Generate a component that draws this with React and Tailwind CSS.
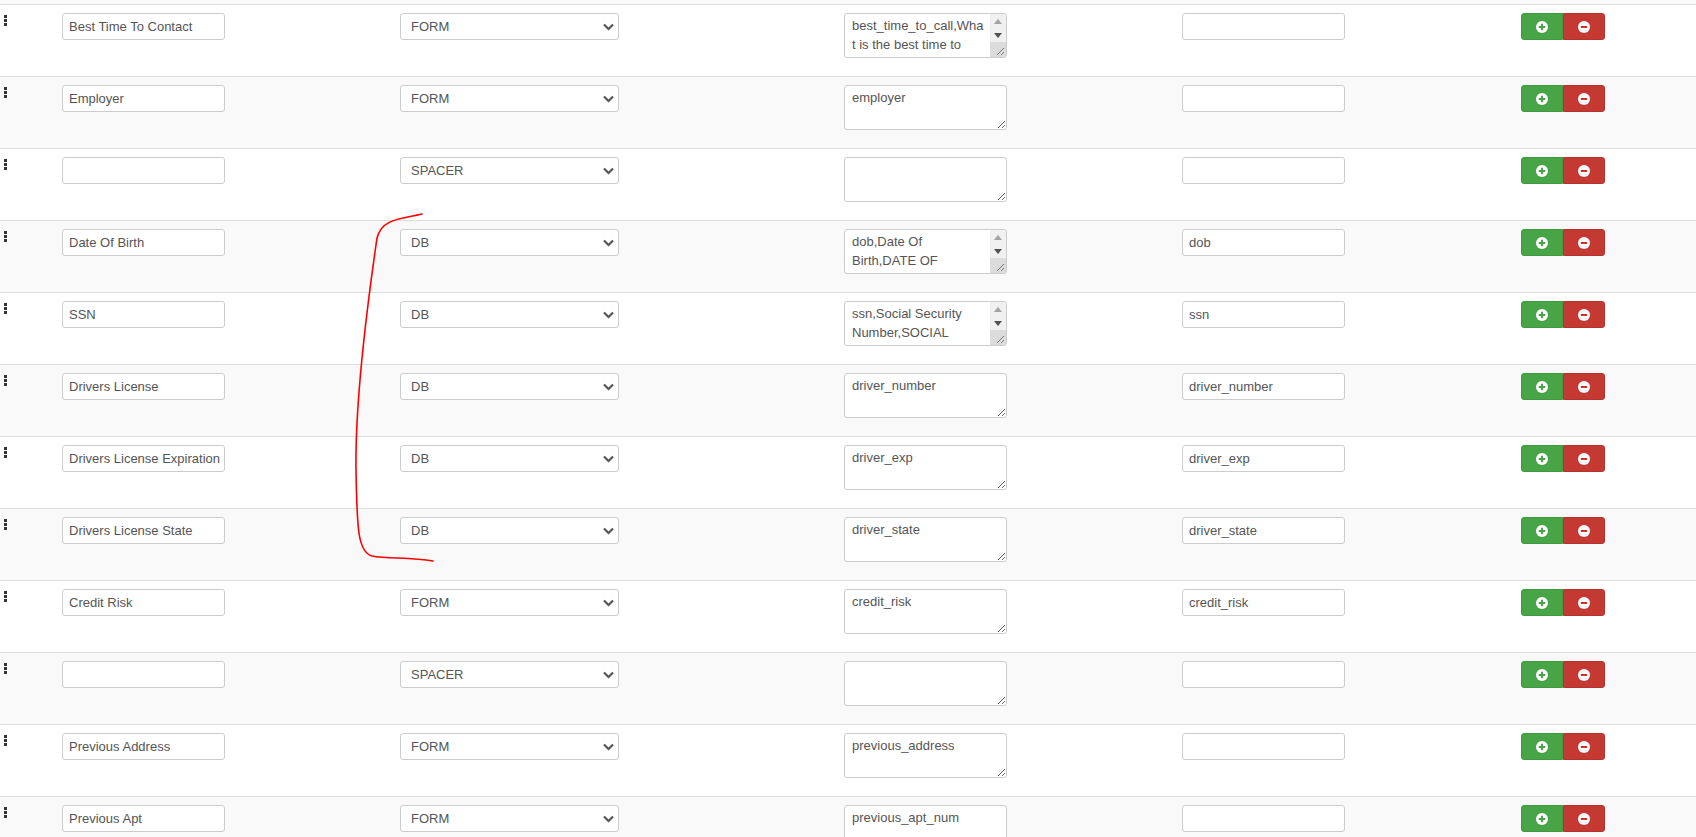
import React from 'react';

const rows = [
    { label: 'Best Time To Contact', type: 'FORM', names: 'best_time_to_call,What is the best time to contact you?,BEST TIME TO CALL', field: '', scroll: true },
    { label: 'Employer', type: 'FORM', names: 'employer', field: '' },
    { label: '', type: 'SPACER', names: '', field: '' },
    { label: 'Date Of Birth', type: 'DB', names: 'dob,Date Of Birth,DATE OF BIRTH,Date of Birth,DOB', field: 'dob', scroll: true },
    { label: 'SSN', type: 'DB', names: 'ssn,Social Security Number,SOCIAL SECURITY NUMBER,SSN', field: 'ssn', scroll: true },
    { label: 'Drivers License', type: 'DB', names: 'driver_number', field: 'driver_number' },
    { label: 'Drivers License Expiration', type: 'DB', names: 'driver_exp', field: 'driver_exp' },
    { label: 'Drivers License State', type: 'DB', names: 'driver_state', field: 'driver_state' },
    { label: 'Credit Risk', type: 'FORM', names: 'credit_risk', field: 'credit_risk' },
    { label: '', type: 'SPACER', names: '', field: '' },
    { label: 'Previous Address', type: 'FORM', names: 'previous_address', field: '' },
    { label: 'Previous Apt', type: 'FORM', names: 'previous_apt_num', field: '' },
];

const inputCls = 'h-[27px] w-[163px] border border-[#ccc] rounded-[3px] bg-white pl-[6px] pr-[2px] text-[13px] text-[#555] outline-none';

// vertical "option" handle used for dragging rows
const Handle = () => (
    <div className="flex flex-col gap-[1px]">
        <span className="block w-[3px] h-[3px] bg-[#333]" />
        <span className="block w-[3px] h-[3px] bg-[#333]" />
        <span className="block w-[3px] h-[3px] bg-[#333]" />
    </div>
);

const Chevron = () => (
    <svg className="absolute right-[4px] top-[9px] pointer-events-none" width="13" height="9" viewBox="0 0 13 9">
        <path d="M2 2.5l4.5 4.5 4.5-4.5" fill="none" stroke="#555" strokeWidth="2.2" />
    </svg>
);

const SignIcon = ({ plus, color }) => (
    <svg width="12" height="12" viewBox="0 0 12 12">
        <circle cx="6" cy="6" r="6" fill="#fff" />
        <path d="M2.8 6h6.4" stroke={color} strokeWidth="2" />
        {plus && <path d="M6 2.8v6.4" stroke={color} strokeWidth="2" />}
    </svg>
);

// windows-like scrollbar drawn over textareas whose text overflows
const FakeScrollbar = () => (
    <div className="absolute right-[1px] top-[1px] bottom-[1px] flex w-[16px] flex-col rounded-r-[2px] overflow-hidden pointer-events-none">
        <div className="flex h-[14px] items-center justify-center bg-[#f0f0f0]">
            <svg width="8" height="5" viewBox="0 0 8 5"><path d="M0 5L4 0L8 5Z" fill="#a3a3a3" /></svg>
        </div>
        <div className="flex h-[14px] items-center justify-center bg-[#f0f0f0]">
            <svg width="8" height="5" viewBox="0 0 8 5"><path d="M0 0L8 0L4 5Z" fill="#505050" /></svg>
        </div>
        <div className="relative flex-1 bg-[#dcdcdc]">
            <svg className="absolute right-[2px] bottom-[2px]" width="8" height="8" viewBox="0 0 8 8">
                <path d="M1 8L8 1M5 8L8 5" stroke="#777" strokeWidth="1" />
            </svg>
        </div>
    </div>
);

const Row = ({ row, striped }) => (
    <div className={`grid grid-cols-[54px_338px_444px_338px_339px_1fr] h-[72px] border-t border-[#ddd] ${striped ? 'bg-[#f9f9f9]' : 'bg-white'}`}>
        <div className="pl-[4px] pt-[10px]">
            <Handle />
        </div>
        <div className="pl-2 pt-2">
            <input className={inputCls} defaultValue={row.label} />
        </div>
        <div className="pl-2 pt-2">
            <div className="relative w-[219px]">
                <select
                    defaultValue={row.type}
                    className="h-[27px] w-[219px] appearance-none border border-[#ccc] rounded-[3px] bg-white pl-[10px] text-[13px] text-[#555] outline-none"
                >
                    <option>FORM</option>
                    <option>DB</option>
                    <option>SPACER</option>
                </select>
                <Chevron />
            </div>
        </div>
        <div className="pl-2 pt-2">
            <div className="relative w-[163px]">
                <textarea
                    className={`block h-[45px] w-[163px] border border-[#ccc] rounded-[3px] bg-white pl-[7px] pt-[3px] pb-0 text-[13px] leading-[18.5px] text-[#555] outline-none ${row.scroll ? 'overflow-hidden pr-[20px]' : 'pr-[7px]'}`}
                    defaultValue={row.names}
                />
                {row.scroll && <FakeScrollbar />}
            </div>
        </div>
        <div className="pl-2 pt-2">
            <input className={inputCls} defaultValue={row.field} />
        </div>
        <div className="pl-2 pt-2">
            <div className="flex">
                <button className="flex h-[27px] w-[42px] items-center justify-center rounded-l-[3px] border border-[#3f9a3f] bg-[#47a447]">
                    <SignIcon plus color="#47a447" />
                </button>
                <button className="flex h-[27px] w-[42px] items-center justify-center rounded-r-[3px] border border-[#b5332c] bg-[#c43a32]">
                    <SignIcon color="#c43a32" />
                </button>
            </div>
        </div>
    </div>
);

export default function App() {
    return (
        <div className="relative h-[837px] overflow-hidden bg-white" style={{ fontFamily: '"Liberation Sans", Arial, sans-serif' }}>
            <div className="h-[4px] bg-[#f9f9f9]" />
            {rows.map((row, i) => (
                <Row key={i} row={row} striped={i % 2 === 1} />
            ))}
            {/* hand-drawn red annotation */}
            <svg className="absolute left-0 top-0 pointer-events-none" width="1696" height="837">
                <path
                    d="M422 214 C402 219, 382 218, 377 238 C368 300, 355 400, 356 470 C357 530, 358 552, 372 556 C388 559, 410 557, 433 561"
                    fill="none"
                    stroke="#f00"
                    strokeWidth="1.6"
                    strokeLinecap="round"
                />
            </svg>
        </div>
    );
}
